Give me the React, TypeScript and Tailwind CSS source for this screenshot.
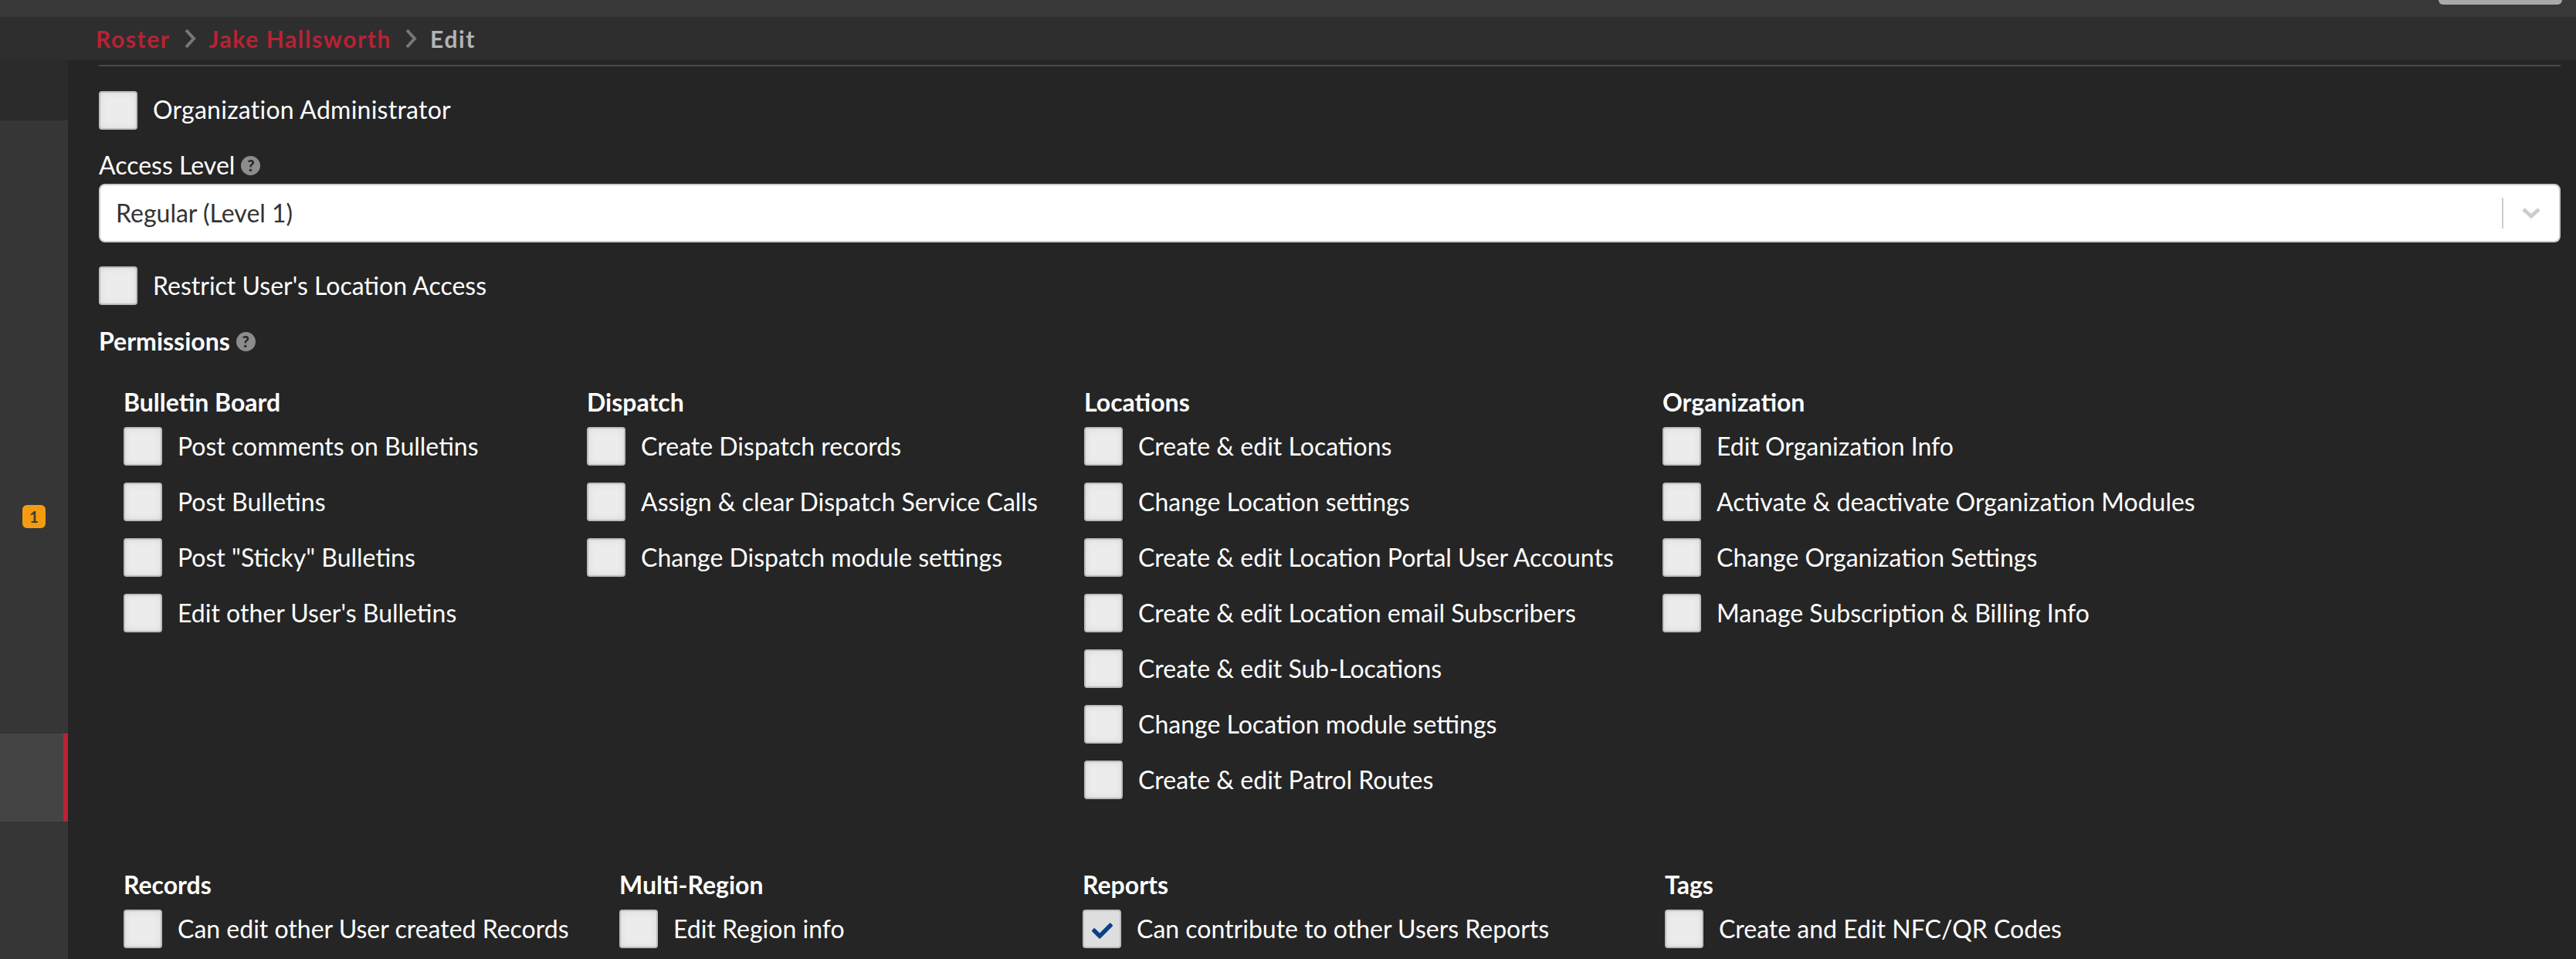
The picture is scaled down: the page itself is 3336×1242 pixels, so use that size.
import React from 'react';
import { FaCheck } from 'react-icons/fa';

interface Section {
  title: string;
  width: string;
  items: string[];
}

const topSections: Section[] = [
  {
    title: 'Bulletin Board',
    width: 'w-[600px]',
    items: ['Post comments on Bulletins', 'Post Bulletins', 'Post "Sticky" Bulletins', "Edit other User's Bulletins"],
  },
  {
    title: 'Dispatch',
    width: 'w-[644px]',
    items: ['Create Dispatch records', 'Assign & clear Dispatch Service Calls', 'Change Dispatch module settings'],
  },
  {
    title: 'Locations',
    width: 'w-[749px]',
    items: [
      'Create & edit Locations',
      'Change Location settings',
      'Create & edit Location Portal User Accounts',
      'Create & edit Location email Subscribers',
      'Create & edit Sub-Locations',
      'Change Location module settings',
      'Create & edit Patrol Routes',
    ],
  },
  {
    title: 'Organization',
    width: 'w-[800px]',
    items: [
      'Edit Organization Info',
      'Activate & deactivate Organization Modules',
      'Change Organization Settings',
      'Manage Subscription & Billing Info',
    ],
  },
];

const bottomSections: Section[] = [
  { title: 'Records', width: 'w-[642px]', items: ['Can edit other User created Records'] },
  { title: 'Multi-Region', width: 'w-[600px]', items: ['Edit Region info'] },
  { title: 'Reports', width: 'w-[754px]', items: ['Can contribute to other Users Reports'] },
  { title: 'Tags', width: 'w-[800px]', items: ['Create and Edit NFC/QR Codes'] },
];

const Checkbox = ({ checked }: { checked?: boolean }) => (
  <div
    className={`flex h-[50px] w-[50px] shrink-0 items-center justify-center rounded-[4px] border-2 border-[#bdbdbd] ${
      checked ? 'bg-[#dedede]' : 'bg-[#ececec] shadow-[inset_0_0_8px_#d8d8d8]'
    }`}
  >
    {checked && <FaCheck className="mt-[4px] h-[27px] w-[27px] text-[#0d3f8a]" />}
  </div>
);

const Hint = () => (
  <span className="ml-[8px] flex h-[25px] w-[25px] items-center justify-center rounded-full bg-[#8c8c8c] text-[20px] font-black leading-none text-[#252525]">
    ?
  </span>
);

const Chevron = () => (
  <svg width="16" height="26" viewBox="0 0 16 26" className="mx-[17px]">
    <polyline points="3,2 13,13 3,24" fill="none" stroke="#777777" strokeWidth="4" />
  </svg>
);

const PermissionGroup = ({ section, checked }: { section: Section; checked?: string }) => (
  <div className={section.width}>
    <h4 className="mb-[14px] h-[36px] text-[32px] font-bold leading-[36px] text-white">{section.title}</h4>
    <div className="flex flex-col gap-[22px]">
      {section.items.map((item) => (
        <div key={item} className="flex h-[50px] items-center gap-[20px]">
          <Checkbox checked={item === checked} />
          <span className="whitespace-nowrap text-[32px] text-white">{item}</span>
        </div>
      ))}
    </div>
  </div>
);

export default function App() {
  return (
    <div className="flex h-[1242px] w-[3336px] flex-col overflow-hidden bg-[#252525] font-['Lato','Liberation_Sans',sans-serif]">
      <div className="flex h-[22px] shrink-0 justify-end bg-[#383838] pr-[18px]">
        <div className="h-[6px] w-[160px] rounded-b-[6px] bg-[#a9a9a9]" />
      </div>
      <div className="flex h-[56px] shrink-0 items-center bg-[#2e2e2e] pl-[124px] text-[30px] font-bold tracking-[1.6px]">
        <span className="text-[#b92234]">Roster</span>
        <Chevron />
        <span className="text-[#b92234]">Jake Hallsworth</span>
        <Chevron />
        <span className="text-[#b4b4b4]">Edit</span>
      </div>
      <div className="flex min-h-0 flex-1">
        <aside className="flex w-[88px] shrink-0 flex-col bg-[#363636]">
          <div className="h-[78px] bg-[#2b2b2b]" />
          <div className="flex h-[794px] items-start justify-center pt-[498px]">
            <span className="flex h-[30px] w-[30px] items-center justify-center rounded-[6px] bg-[#f39c12] text-[20px] font-bold text-[#3a3a3a]">
              1
            </span>
          </div>
          <div className="h-[114px] border-r-[6px] border-[#b92234] bg-[#444444]" />
        </aside>
        <main className="min-w-0 flex-1 pl-[40px] pr-[20px]">
          <div className="mt-[6px] h-[2px] bg-[#4a4a4a]" />
          <div className="mt-[32px] flex h-[50px] items-center gap-[20px]">
            <Checkbox />
            <span className="mt-[-2px] text-[32px] tracking-[0.25px] text-white">Organization Administrator</span>
          </div>
          <div className="mt-[28px] flex h-[36px] items-center text-[32px] leading-[36px] text-white">
            Access Level
            <Hint />
          </div>
          <div className="mt-[6px] flex h-[76px] items-center rounded-[8px] border-2 border-[#cccccc] bg-white pl-[20px] pr-[24px]">
            <span className="flex-1 text-[32px] text-[#333333]">Regular (Level 1)</span>
            <div className="h-[40px] w-[2px] bg-[#cccccc]" />
            <svg width="24" height="16" viewBox="0 0 24 16" className="ml-[24px]">
              <polyline points="2,3 12,12 22,3" fill="none" stroke="#cccccc" strokeWidth="5" />
            </svg>
          </div>
          <div className="mt-[31px] flex h-[50px] items-center gap-[20px]">
            <Checkbox />
            <span className="text-[32px] text-white">Restrict User's Location Access</span>
          </div>
          <div className="mt-[29px] flex h-[36px] items-center text-[32px] font-bold leading-[36px] text-white">
            Permissions
            <Hint />
          </div>
          <div className="mt-[43px] flex h-[625px] pl-[32px]">
            {topSections.map((section) => (
              <PermissionGroup key={section.title} section={section} />
            ))}
          </div>
          <div className="flex pl-[32px]">
            {bottomSections.map((section) => (
              <PermissionGroup key={section.title} section={section} checked="Can contribute to other Users Reports" />
            ))}
          </div>
        </main>
      </div>
    </div>
  );
}
